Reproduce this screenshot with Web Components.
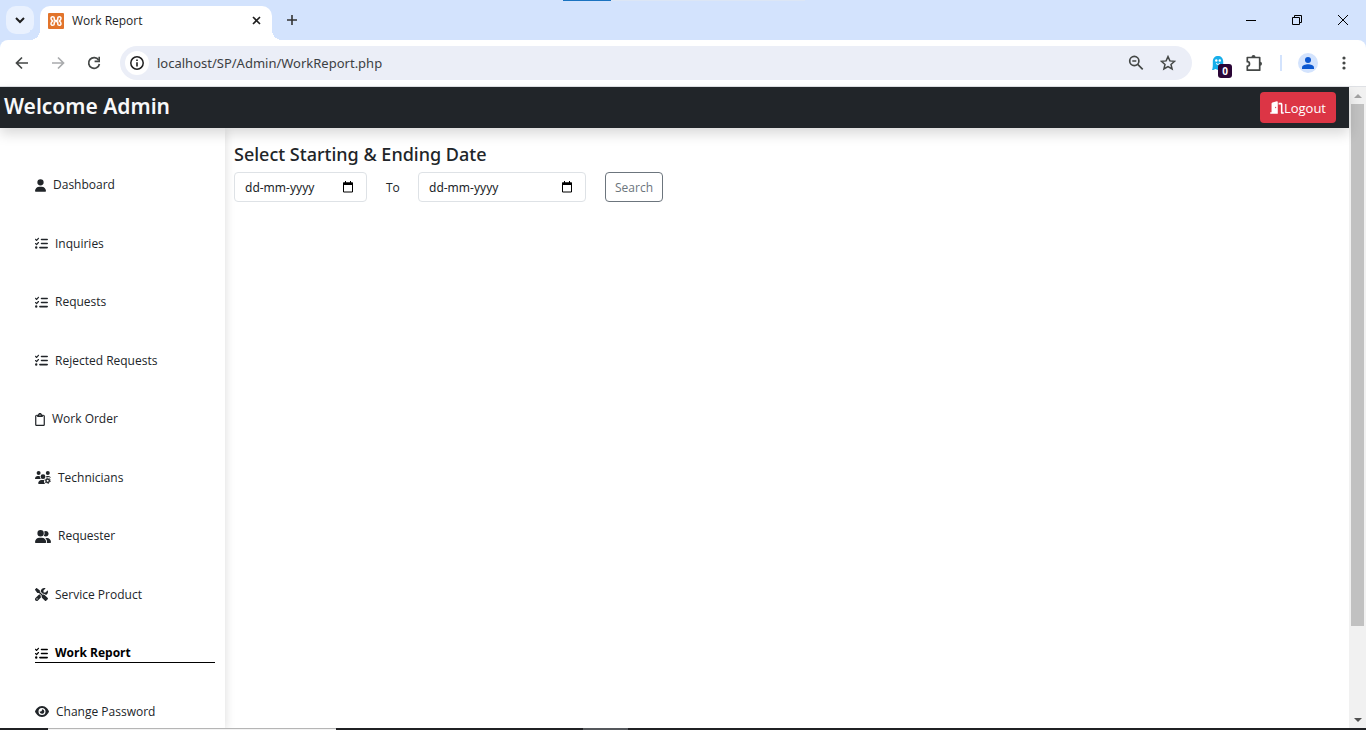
<!DOCTYPE html>
<html lang="en">
<head>
<meta charset="utf-8">
<title>Work Report</title>
<style>
html, body { margin: 0; height: 100%; }
body { font-family: "Open Sans", "Noto Sans", sans-serif; font-size: 12px; color: #212529; overflow: hidden; }
</style>
</head>
<body>
<browser-window>
  <tab-strip slot="tabs" label="Work Report"></tab-strip>
  <address-bar slot="toolbar" url="localhost/SP/Admin/WorkReport.php"></address-bar>
  <admin-page>
    <admin-header slot="header" heading="Welcome Admin"></admin-header>
    <side-nav slot="nav">
      <nav-item icon="user" label="Dashboard"></nav-item>
      <nav-item icon="list" label="Inquiries"></nav-item>
      <nav-item icon="list" label="Requests"></nav-item>
      <nav-item icon="list" label="Rejected Requests"></nav-item>
      <nav-item icon="clipboard" label="Work Order"></nav-item>
      <nav-item icon="usersgear" label="Technicians"></nav-item>
      <nav-item icon="usergroup" label="Requester"></nav-item>
      <nav-item icon="tools" label="Service Product"></nav-item>
      <nav-item icon="list" label="Work Report" active></nav-item>
      <nav-item icon="eye" label="Change Password"></nav-item>
    </side-nav>
    <report-form></report-form>
  </admin-page>
</browser-window>
<script>
const ICONS = {
  user: [11, 448, '<path d="M224 256A128 128 0 1 0 224 0a128 128 0 1 0 0 256zm-45.7 48C79.8 304 0 383.8 0 482.3C0 498.7 13.3 512 29.7 512l388.6 0c16.4 0 29.7-13.3 29.7-29.7C448 383.8 368.2 304 269.7 304l-91.4 0z"/>'],
  list: [13, 512, '<path d="M152.1 38.2c9.9 8.9 10.7 24 1.8 33.9l-72 80c-4.4 4.9-10.6 7.8-17.2 7.9s-12.9-2.4-17.6-7L7 113C-2.3 103.6-2.3 88.4 7 79s24.6-9.4 33.9 0l22.1 22.1 55.1-61.2c8.9-9.9 24-10.7 33.9-1.8zm0 160c9.9 8.9 10.7 24 1.8 33.9l-72 80c-4.4 4.9-10.6 7.8-17.2 7.9s-12.9-2.4-17.6-7L7 273c-9.4-9.4-9.4-24.6 0-33.9s24.6-9.4 33.9 0l22.1 22.1 55.1-61.2c8.9-9.9 24-10.7 33.9-1.8zM224 96c0-17.7 14.3-32 32-32l224 0c17.7 0 32 14.3 32 32s-14.3 32-32 32l-224 0c-17.7 0-32-14.3-32-32zm0 160c0-17.7 14.3-32 32-32l224 0c17.7 0 32 14.3 32 32s-14.3 32-32 32l-224 0c-17.7 0-32-14.3-32-32zM160 416c0-17.7 14.3-32 32-32l288 0c17.7 0 32 14.3 32 32s-14.3 32-32 32l-288 0c-17.7 0-32-14.3-32-32zM48 368a48 48 0 1 1 0 96 48 48 0 1 1 0-96z"/>'],
  clipboard: [10, 384, '<path d="M280 64l40 0c35.3 0 64 28.7 64 64l0 320c0 35.3-28.7 64-64 64L64 512c-35.3 0-64-28.7-64-64L0 128C0 92.7 28.7 64 64 64l40 0 9.6 0C121 27.5 153.3 0 192 0s71 27.5 78.4 64l9.6 0zM64 112c-8.8 0-16 7.2-16 16l0 320c0 8.8 7.2 16 16 16l256 0c8.8 0 16-7.2 16-16l0-320c0-8.8-7.2-16-16-16l-16 0 0 24c0 13.3-10.7 24-24 24l-88 0-88 0c-13.3 0-24-10.7-24-24l0-24-16 0zm128-8a24 24 0 1 0 0-48 24 24 0 1 0 0 48z"/>'],
  usersgear: [16, 640, '<circle cx="144" cy="80" r="80"/><circle cx="512" cy="80" r="80"/><circle cx="320" cy="224" r="96"/><path d="M0 298.7C0 239.8 47.8 192 106.7 192h42.7c15.9 0 31 3.5 44.6 9.7-1.3 7.2-1.9 14.7-1.9 22.3 0 38.2 16.8 72.5 43.3 96H21.3C9.6 320 0 310.4 0 298.7zM446 202c13-6 29-10 44-10h43c50 0 92 34 104 80l-60-22-90-10-38 20c2-20 2-40-3-58zM128 485.3C128 411.7 187.7 352 261.3 352h100c-12 50 0 120 50 160H154.7c-14.7 0-26.7-11.9-26.7-26.7z"/><circle cx="506" cy="384" r="70" fill="none" stroke="currentColor" stroke-width="58"/><circle cx="506" cy="384" r="112" fill="none" stroke="currentColor" stroke-width="36" stroke-dasharray="50 67.3"/>'],
  usergroup: [16, 640, '<path d="M96 128a128 128 0 1 1 256 0A128 128 0 1 1 96 128zM0 482.3C0 383.8 79.8 304 178.3 304l91.4 0C368.2 304 448 383.8 448 482.3c0 16.4-13.3 29.7-29.7 29.7L29.7 512C13.3 512 0 498.7 0 482.3zM609.3 512l-137.8 0c5.4-9.4 8.6-20.3 8.6-32l0-8c0-60.7-27.1-115.2-69.8-151.8c2.4-.1 4.7-.2 7.1-.2l61.4 0C567.8 320 640 392.2 640 481.3c0 17-13.8 30.7-30.7 30.7zM432 256c-31 0-59-12.6-79.3-32.9C372.4 196.5 384 163.6 384 128c0-26.8-6.6-52.1-18.3-74.3C384.3 40.1 407.2 32 432 32c61.9 0 112 50.1 112 112s-50.1 112-112 112z"/>'],
  tools: [13, 512, '<path d="M78.6 5C69.1-2.4 55.6-1.5 47 7L7 47c-8.5 8.5-9.4 22-2.1 31.6l80 104c4.5 5.9 11.6 9.4 19 9.4l54.1 0 109 109c-14.7 29-10 65.4 14.3 89.6l112 112c12.5 12.5 32.8 12.5 45.3 0l64-64c12.5-12.5 12.5-32.8 0-45.3l-112-112c-24.2-24.2-60.6-29-89.6-14.3l-109-109 0-54.1c0-7.5-3.5-14.5-9.4-19L78.6 5zM19.9 396.1C7.2 408.8 0 426.1 0 444.1C0 481.6 30.4 512 67.9 512c18 0 35.3-7.2 48-19.9L233.7 374.3c-7.8-20.9-9-43.6-3.6-65.1l-61.7-61.7L19.9 396.1zM512 144c0-10.5-1.1-20.7-3.2-30.5c-2.4-11.2-16.1-14.1-24.2-6l-63.9 63.9c-3 3-7.1 4.7-11.3 4.7L352 176c-8.8 0-16-7.2-16-16l0-57.4c0-4.2 1.7-8.3 4.7-11.3l63.9-63.9c8.1-8.1 5.2-21.8-6-24.2C388.7 1.1 378.5 0 368 0C288.5 0 224 64.5 224 144l0 .8 85.3 85.3c36-9.1 75.8 .5 104 28.7L429 274.5c49-23 83-72.8 83-130.5zM56 432a24 24 0 1 1 48 0 24 24 0 1 1 -48 0z"/>'],
  eye: [14, 576, '<path d="M288 32c-80.8 0-145.5 36.8-192.6 80.6C48.6 156 17.3 208 2.5 243.7c-3.3 7.9-3.3 16.7 0 24.6C17.3 304 48.6 356 95.4 399.4C142.5 443.2 207.2 480 288 480s145.5-36.8 192.6-80.6c46.8-43.5 78.1-95.4 93-131.1c3.3-7.9 3.3-16.7 0-24.6c-14.9-35.7-46.2-87.7-93-131.1C433.5 68.8 368.8 32 288 32zM144 256a144 144 0 1 1 288 0 144 144 0 1 1 -288 0zm144-64c0 35.3-28.7 64-64 64c-7.1 0-13.9-1.2-20.3-3.3c-5.5-1.8-11.9 1.6-11.7 7.4c.3 6.9 1.3 13.8 3.2 20.7c13.7 51.2 66.4 81.6 117.6 67.9s81.6-66.4 67.9-117.6c-11.1-41.5-47.8-69.4-88.6-71.1c-5.8-.2-9.2 6.1-7.4 11.7c2.1 6.4 3.3 13.2 3.3 20.3z"/>'],
  door: [14, 576, '<path d="M320 32c0-9.9-4.5-19.2-12.3-25.2S289.8-1.4 280.2 1l-179.9 45C79 51.3 64 70.5 64 92.5L64 448l-32 0c-17.7 0-32 14.3-32 32s14.3 32 32 32l64 0 192 0 32 0 0-32 0-448zM256 256c0 17.7-10.7 32-24 32s-24-14.3-24-32s10.7-32 24-32s24 14.3 24 32zm96-128l96 0 0 352c0 17.7 14.3 32 32 32l64 0c17.7 0 32-14.3 32-32s-14.3-32-32-32l-32 0 0-320c0-35.3-28.7-64-64-64l-96 0 0 64z"/>']
};
const icon = name => {
  const [w, vb, body] = ICONS[name];
  return `<svg width="${w}" height="13" viewBox="0 0 ${vb} 512" fill="currentColor" aria-hidden="true">${body}</svg>`;
};
const RESET = `*{box-sizing:border-box} svg{display:block;flex:none} button{font:inherit;color:inherit;border:0;background:none;padding:0;margin:0;display:flex;align-items:center;justify-content:center;flex:none}`;

function define(tag, render) {
  customElements.define(tag, class extends HTMLElement {
    constructor() { super(); this.attachShadow({ mode: 'open' }); }
    connectedCallback() {
      const t = document.createElement('template');
      t.innerHTML = render(this);
      this.shadowRoot.replaceChildren(t.content.cloneNode(true));
    }
  });
}

define('browser-window', () => `<style>${RESET}
  :host{display:flex;flex-direction:column;height:100vh;background:#fff}
  .page{flex:1;min-height:0;display:flex}
  ::slotted(admin-page){flex:1;min-width:0}
  .task{height:2px;background:#202124;display:flex}
  .task i{margin-left:48px;width:288px;background:#f3f3f3;border-top:1px solid #b5b5b5}
  .task b{margin-left:247px;width:45px;background:#55585c}
  </style>
  <slot name="tabs"></slot><slot name="toolbar"></slot>
  <div class="page"><slot></slot><scroll-track></scroll-track></div>
  <div class="task"><i></i><b></b></div>`);

define('scroll-track', () => `<style>${RESET}
  :host{display:flex;flex-direction:column;align-items:center;width:17px;background:#f1f1f1;flex:none}
  button{width:17px;height:17px}
  .rail{flex:1;width:13px}
  .thumb{height:86%;background:#c1c1c1}
  </style>
  <button aria-label="Scroll up"><svg width="8" height="4" viewBox="0 0 8 4"><path d="M0 4L4 0l4 4z" fill="#a3a3a3"/></svg></button>
  <div class="rail"><div class="thumb"></div></div>
  <button aria-label="Scroll down"><svg width="8" height="4" viewBox="0 0 8 4"><path d="M0 0l4 4 4-4z" fill="#505050"/></svg></button>`);

define('tab-strip', el => `<style>${RESET}
  :host{display:flex;align-items:flex-end;height:40px;background:#d3e3fd;color:#1f1f1f;flex:none;position:relative}
  .search{width:28px;height:28px;margin:0 6px 6px;border-radius:10px;background:#e9f1fe}
  .tab{position:relative;width:232px;height:34px;background:#fff;border-radius:10px 10px 0 0;display:flex;align-items:center;padding:0 8px 5px;gap:8px;flex:none}
  .tab::before,.tab::after{content:"";position:absolute;bottom:0;width:10px;height:10px}
  .tab::before{right:100%;background:radial-gradient(circle at 0 0,#d3e3fd 10px,#fff 10px)}
  .tab::after{left:100%;background:radial-gradient(circle at 100% 0,#d3e3fd 10px,#fff 10px)}
  .tab span{flex:1;line-height:16px}
  .tab button{width:16px;height:16px}
  .new{width:28px;height:28px;margin:0 0 6px 6px}
  .win{display:flex;margin-left:auto}
  .win button{width:46px;height:40px}
  .load{position:absolute;top:0;left:563px;width:242px;height:1px;background:linear-gradient(90deg,#1a73c0 48px,#dce6f5 48px)}
  </style>
  <div class="load"></div>
  <button class="search" aria-label="Search tabs"><svg width="10" height="10" viewBox="0 0 10 10"><path d="M1 3l4 4 4-4" fill="none" stroke="#1f1f1f" stroke-width="2"/></svg></button>
  <div class="tab">
    <svg width="16" height="16" viewBox="0 0 16 16"><rect width="16" height="16" rx="1" fill="#e2742b"/><path d="M6.200 6.300V4.800C6.200 3.600 3 3 3 5.300c0 1.700 1 2.200 1.700 2.700C4 8.500 3 9 3 10.700c0 2.300 3.200 1.700 3.200.500V9.500C6.200 8 9.800 8 9.800 9.500v1.700c0 1.200 3.200 1.800 3.200-.500 0-1.700-1-2.200-1.700-2.700C12 7.500 13 7 13 5.300c0-2.300-3.200-1.700-3.200-.500v1.500C9.800 8 6.200 8 6.200 6.300z" fill="none" stroke="#fff" stroke-width="1.500"/></svg>
    <span>${el.getAttribute('label')}</span>
    <button aria-label="Close tab"><svg width="9" height="9" viewBox="0 0 9 9"><path d="M1 1l7 7M8 1L1 8" stroke="#1f1f1f" stroke-width="1.600"/></svg></button>
  </div>
  <button class="new" aria-label="New tab"><svg width="12" height="12" viewBox="0 0 12 12"><path d="M6 1v10M1 6h10" stroke="#333" stroke-width="1.600"/></svg></button>
  <div class="win">
    <button aria-label="Minimize"><svg width="10" height="10" viewBox="0 0 10 10"><path d="M0 5.500h10" stroke="#000"/></svg></button>
    <button aria-label="Restore"><svg width="10" height="10" viewBox="0 0 10 10"><path d="M.5 2.500h7v7h-7zM2.500 2.500v-2h7v7h-2" fill="none" stroke="#000"/></svg></button>
    <button aria-label="Close"><svg width="10" height="10" viewBox="0 0 10 10"><path d="M0 0l10 10M10 0L0 10" stroke="#000"/></svg></button>
  </div>`);

define('address-bar', el => `<style>${RESET}
  :host{display:block;border-bottom:1px solid #dfe1e5;background:#d3e3fd;flex:none}
  .bar{display:flex;align-items:center;height:46px;background:#fff;border-radius:8px 8px 0 0;padding:0 4px}
  .bar > button{width:36px;height:34px}
  .omni{flex:1;min-width:0;height:34px;margin-left:8px;border-radius:17px;background:#ebeef7;display:flex;align-items:center;padding:0 8px 0 5px}
  .omni button{width:32px;height:24px}
  .omni .info{width:24px;border-radius:12px;background:#fff}
  input{flex:1;min-width:0;border:0;background:none;outline:0;padding:0 8px;font:13px "Noto Sans",sans-serif;color:#3c4043}
  .ext{position:relative;margin-left:8px}
  .badge{position:absolute;left:18px;top:18px;width:14px;height:14px;border-radius:3px;background:#2a0536;color:#fff;font-size:10px;font-weight:700;line-height:14px;text-align:center}
  .sep{width:2px;height:16px;background:#d3e3fd;margin:0 8px}
  </style>
  <div class="bar">
    <button aria-label="Back"><svg width="14" height="14" viewBox="0 0 14 14"><path d="M13 7H2M7 1.500L1.500 7 7 12.500" fill="none" stroke="#444746" stroke-width="1.700"/></svg></button>
    <button aria-label="Forward"><svg width="14" height="14" viewBox="0 0 14 14"><path d="M1 7h11M7 1.500L12.500 7 7 12.500" fill="none" stroke="#a9abad" stroke-width="1.700"/></svg></button>
    <button aria-label="Reload"><svg width="14" height="14" viewBox="0 0 14 14"><path d="M11.600 4A5.400 5.400 0 1 0 12.400 8" fill="none" stroke="#444746" stroke-width="1.700"/><path d="M13 .8v5.400H7.600V4.600h3.800V.8z" fill="#444746"/></svg></button>
    <div class="omni">
      <button class="info" aria-label="Site information"><svg width="14" height="14" viewBox="0 0 14 14"><circle cx="7" cy="7" r="6.200" fill="none" stroke="#1f1f1f" stroke-width="1.500"/><path d="M7 6.200v4.300M7 3.500v1.600" stroke="#1f1f1f" stroke-width="1.600"/></svg></button>
      <input type="text" aria-label="Address" value="${el.getAttribute('url')}">
      <button aria-label="Zoom"><svg width="16" height="16" viewBox="0 0 16 16"><circle cx="6.300" cy="6" r="4.600" fill="none" stroke="#444746" stroke-width="1.700"/><path d="M9.700 9.400l5 5M4.300 6h4" stroke="#444746" stroke-width="1.700"/></svg></button>
      <button aria-label="Bookmark"><svg width="16" height="16" viewBox="0 0 16 16"><path d="M8 1.600l1.900 4.300 4.700.400-3.600 3.100 1.100 4.600L8 11.600 3.900 14 5 9.400 1.400 6.300l4.700-.400z" fill="none" stroke="#444746" stroke-width="1.500"/></svg></button>
    </div>
    <button class="ext" aria-label="Extension"><svg width="14" height="16" viewBox="0 0 14 16"><path d="M1 15c1-2 .8-5 .8-8.500C1.800 3 4 1 7 1s5.200 2 5.200 5.500c0 3.500 0 6 .8 8.500-2 .3-2.500-1-3.600-1S8 15 7 15s-1.500-1-2.500-1-1.500 1.300-3.500 1z" fill="#17aeea"/><circle cx="5.300" cy="5.500" r="1.200" fill="#fff"/><circle cx="8.800" cy="5.500" r="1.200" fill="#fff"/><path d="M5 8.500q2 2 4 0" fill="none" stroke="#fff"/></svg><span class="badge">0</span></button>
    <button aria-label="Extensions"><svg width="18" height="18" viewBox="0 0 18 18"><path d="M2.300 3.500H14.700V16.200H2.300v-4.100a2.200 2.200 0 0 0 0-4.400z" fill="none" stroke="#444746" stroke-width="1.700" stroke-linejoin="round"/><path d="M6.500 3a2 2 0 0 1 4 0zM15 7.800a2 2 0 0 1 0 4z" fill="#444746"/></svg></button>
    <span class="sep"></span>
    <button aria-label="Profile"><svg width="20" height="20" viewBox="0 0 20 20"><circle cx="10" cy="10" r="10" fill="#d3e3fd"/><circle cx="10" cy="7" r="3" fill="#0b57d0"/><path d="M4 16v-1.500C4 12.300 7.500 11.300 10 11.300s6 1 6 3.200V16z" fill="#0b57d0"/></svg></button>
    <button aria-label="Menu"><svg width="4" height="14" viewBox="0 0 4 14"><g fill="#444746"><circle cx="2" cy="2" r="1.600"/><circle cx="2" cy="7" r="1.600"/><circle cx="2" cy="12" r="1.600"/></g></svg></button>
  </div>`);

define('admin-page', () => `<style>${RESET}
  :host{display:flex;flex-direction:column;min-height:0;background:#fff}
  .body{flex:1;min-height:0;display:flex;overflow:hidden}
  ::slotted(report-form){flex:1}
  </style><slot name="header"></slot><div class="body"><slot name="nav"></slot><slot></slot></div>`);

define('admin-header', el => `<style>${RESET}
  :host{display:flex;align-items:center;justify-content:space-between;height:41px;padding:0 13px 0 4px;background:#212529;color:#f8f9fa;box-shadow:0 6px 12px rgba(0,0,0,.15);position:relative;z-index:1;flex:none}
  h1{margin:0 0 4px;font:600 21px/28px "Noto Sans",sans-serif}
  button{height:31px;padding:0 10px;border-radius:4px;background:#dc3545;color:#fff;font-size:13px}
  </style><h1>${el.getAttribute('heading')}</h1><button>${icon('door')}Logout</button>`);

define('side-nav', () => `<style>${RESET}
  :host{display:block;width:225px;flex:none;box-shadow:0 2px 10px rgba(0,0,0,.15)}
  nav{display:grid;grid-auto-rows:59px 58px;align-items:center;padding:28px 10px 0 35px}
  </style><nav><slot></slot></nav>`);

define('nav-item', el => `<style>${RESET}
  :host{display:block}
  a{display:flex;align-items:center;gap:7px;line-height:18px;color:#212529;text-decoration:none;border-bottom:1px solid transparent}
  :host([active]) a{font-weight:700;color:#000;border-color:#000}
  </style><a href="#"${el.hasAttribute('active') ? ' aria-current="page"' : ''}>${icon(el.getAttribute('icon'))}<span>${el.getAttribute('label')}</span></a>`);

define('date-field', el => `<style>${RESET}
  :host{display:flex;align-items:center;height:30px;padding:0 12px 0 10px;border:1px solid #dee2e6;border-radius:4px;background:#fff}
  input{flex:1;min-width:0;border:0;outline:0;padding:0;background:none;font:12px "Noto Sans",sans-serif;color:inherit}
  input::placeholder{color:#212529;opacity:1}
  </style><input type="text" placeholder="dd-mm-yyyy" aria-label="${el.getAttribute('label')}"><button type="button" aria-label="Open calendar"><svg width="12" height="12" viewBox="0 0 12 12"><path d="M1.500 2h9v9h-9z" fill="none" stroke="#000"/><path d="M1 1.500h10V4H1zM3 0h1v2H3zM8 0h1v2H8z"/></svg></button>`);

define('report-form', () => `<style>${RESET}
  :host{display:block;padding:14px 9px}
  h2{margin:0 0 6px;font:500 18px/24px "Noto Sans",sans-serif}
  form{display:flex;align-items:center;gap:19px}
  form span{width:13px}
  .start{width:133px}.end{width:168px}
  form > button{height:30px;padding:0 9px;border:1px solid #6c757d;border-radius:4px;color:#6c757d}
  </style><h2>Select Starting &amp; Ending Date</h2>
  <form onsubmit="return false"><date-field class="start" label="Starting date"></date-field><span>To</span><date-field class="end" label="Ending date"></date-field><button type="submit">Search</button></form>`);
</script>
</body>
</html>
